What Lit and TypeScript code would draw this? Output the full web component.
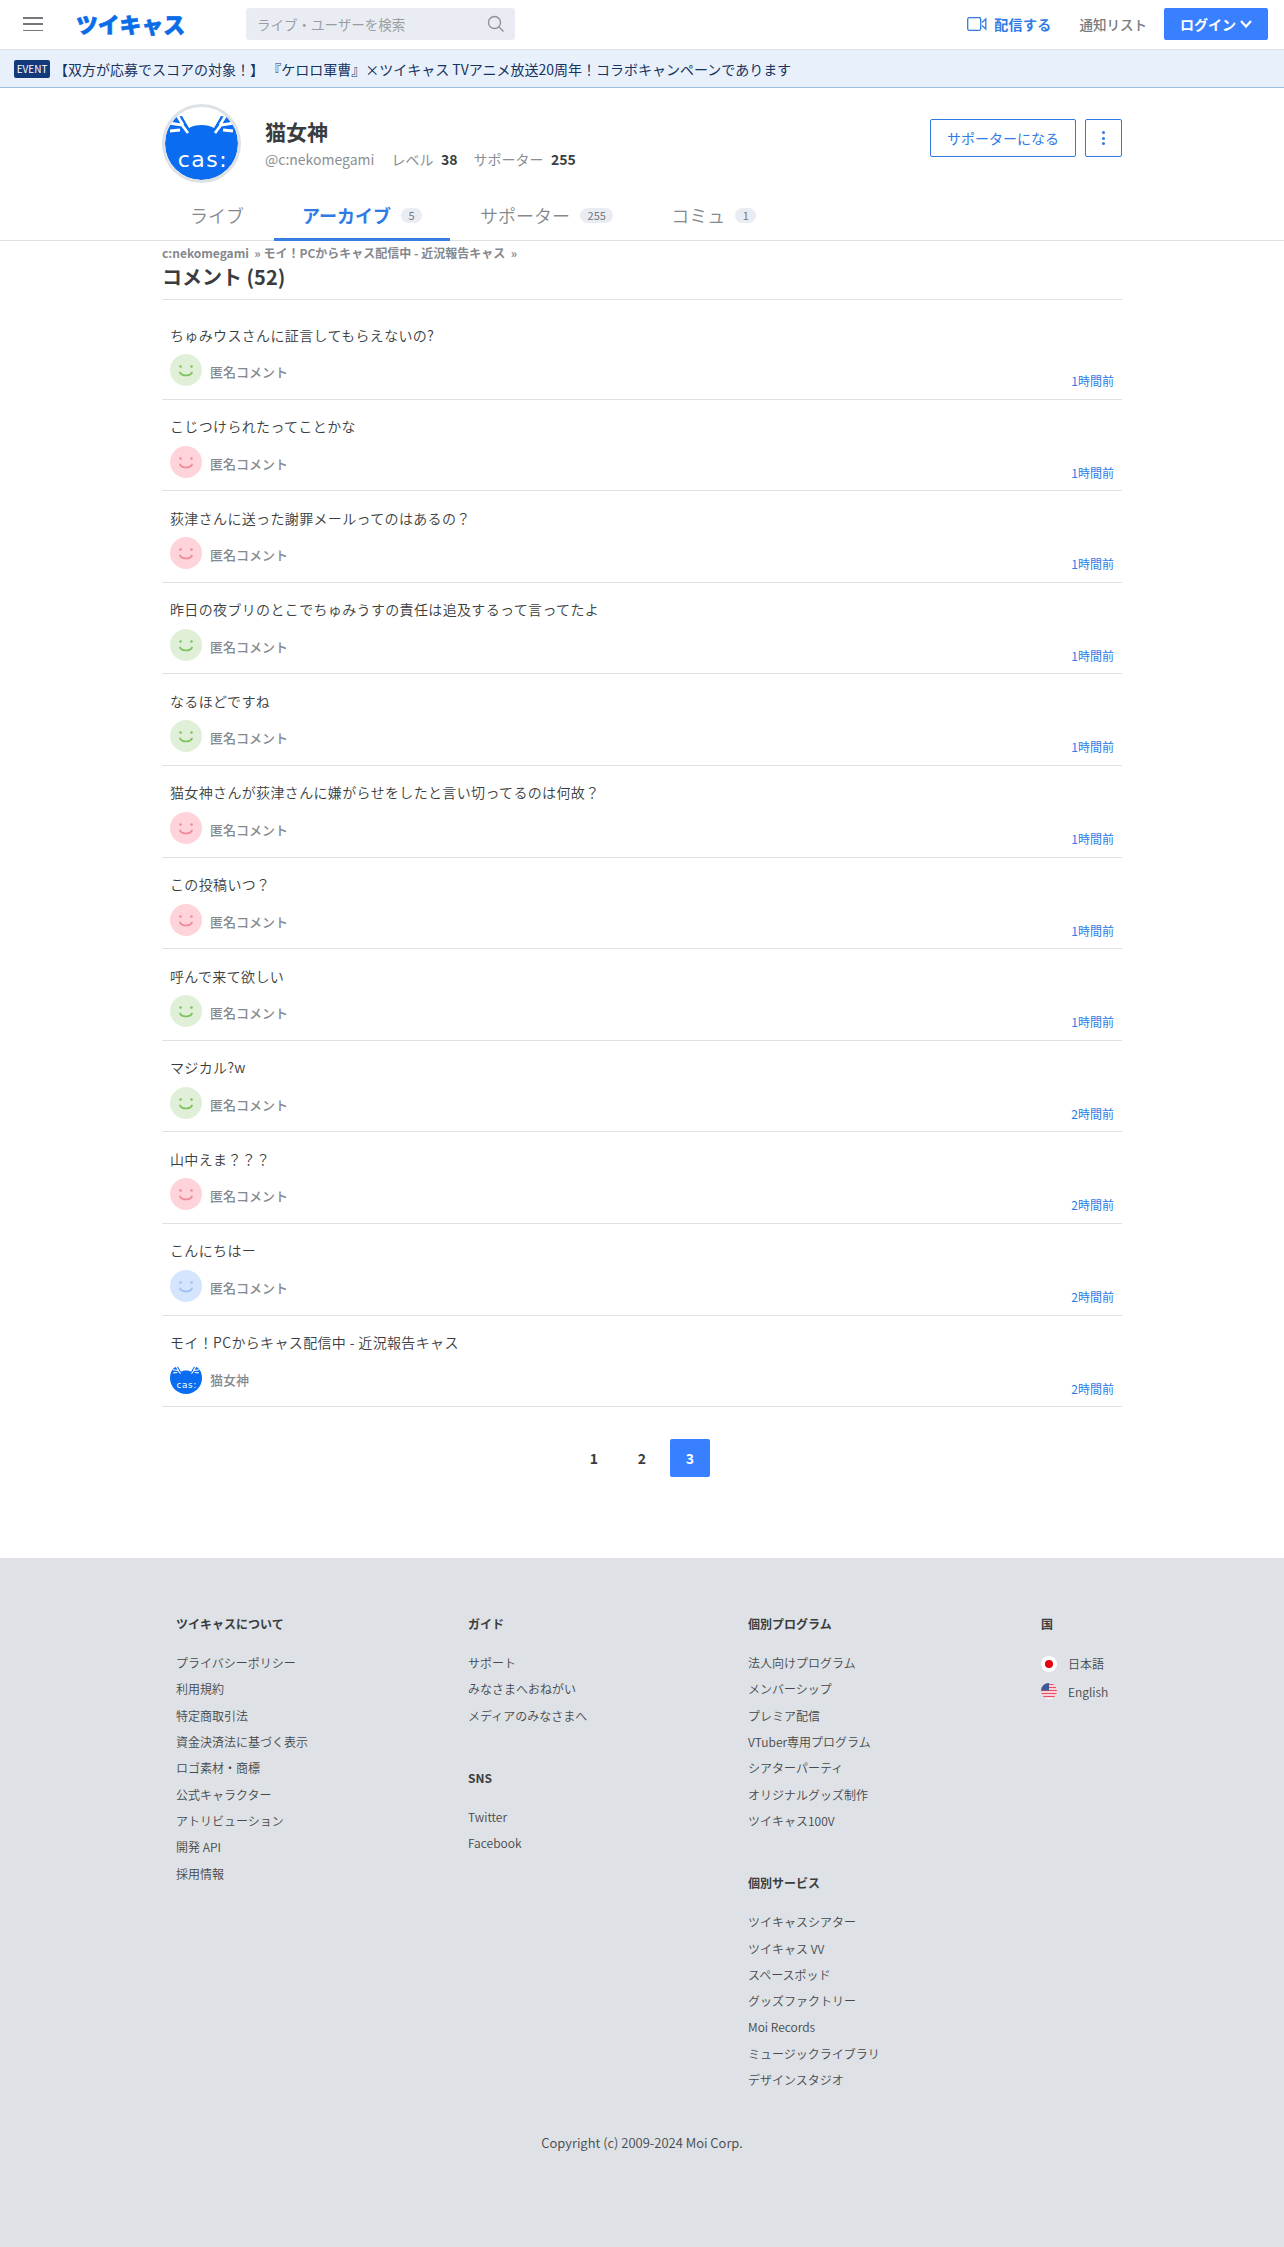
import { LitElement, html, css, svg } from "lit";
import { customElement } from "lit/decorators.js";

const catAvatar = (size: number, ring: boolean) => html`<svg class="cat" width=${size} height=${size} viewBox="0 0 79 79">
  <circle cx="39.5" cy="39.5" r="38" fill="#fff"></circle>
  <clipPath id="c${size}"><circle cx="39.5" cy="39.5" r=${ring ? 36.5 : 39.5}></circle></clipPath>
  <g clip-path="url(#c${size})">
    <path d="M0 22 L12 13 L20 12 L27 24 C33 20 46 20 52 24 L59 12 L67 13 L79 22 L79 79 L0 79 Z" fill="#0a6cf0"></path>
    <path d="M7 19 L20 21 L26 29 M15 11 L21 21 M8 27 L18 26" stroke="#fff" stroke-width="2.8" fill="none"></path>
    <path d="M72 19 L59 21 L53 29 M64 11 L58 21 M71 27 L61 26" stroke="#fff" stroke-width="2.8" fill="none"></path>
    <text x="41" y="63" text-anchor="middle" font-size="22" letter-spacing="1.5" fill="#fff" font-family="'DejaVu Sans', sans-serif">cas:</text>
  </g>
  ${ring ? svg`<circle cx="39.5" cy="39.5" r="38" fill="none" stroke="#dfe2e5" stroke-width="3"></circle>` : ""}
</svg>`;

const smile = (bg: string, fg: string) => html`<svg class="face" width="32" height="32" viewBox="0 0 32 32">
  <circle cx="16" cy="16" r="16" fill=${bg}></circle>
  <circle cx="10.5" cy="12.5" r="1.3" fill=${fg}></circle>
  <circle cx="21.5" cy="12.5" r="1.3" fill=${fg}></circle>
  <path d="M10 18.5 C12 22.5 20 22.5 22 18.5" stroke=${fg} stroke-width="1.7" fill="none" stroke-linecap="round"></path>
</svg>`;

const G = ["#e0f0d8", "#7cc35e"];
const R = ["#ffd3da", "#f08a9a"];
const B = ["#d5e5fd", "#9dbff2"];

const comments: [string, string[] | null, string][] = [
  ["ちゅみウスさんに証言してもらえないの?", G, "1時間前"],
  ["こじつけられたってことかな", R, "1時間前"],
  ["荻津さんに送った謝罪メールってのはあるの？", R, "1時間前"],
  ["昨日の夜ブリのとこでちゅみうすの責任は追及するって言ってたよ", G, "1時間前"],
  ["なるほどですね", G, "1時間前"],
  ["猫女神さんが荻津さんに嫌がらせをしたと言い切ってるのは何故？", R, "1時間前"],
  ["この投稿いつ？", R, "1時間前"],
  ["呼んで来て欲しい", G, "1時間前"],
  ["マジカル?w", G, "2時間前"],
  ["山中えま？？？", R, "2時間前"],
  ["こんにちはー", B, "2時間前"],
  ["モイ！PCからキャス配信中 - 近況報告キャス", null, "2時間前"],
];

const footerCols: { h: string; items: string[] }[][] = [
  [{ h: "ツイキャスについて", items: ["プライバシーポリシー", "利用規約", "特定商取引法", "資金決済法に基づく表示", "ロゴ素材・商標", "公式キャラクター", "アトリビューション", "開発 API", "採用情報"] }],
  [
    { h: "ガイド", items: ["サポート", "みなさまへおねがい", "メディアのみなさまへ"] },
    { h: "SNS", items: ["Twitter", "Facebook"] },
  ],
  [
    { h: "個別プログラム", items: ["法人向けプログラム", "メンバーシップ", "プレミア配信", "VTuber専用プログラム", "シアターパーティ", "オリジナルグッズ制作", "ツイキャス100V"] },
    { h: "個別サービス", items: ["ツイキャスシアター", "ツイキャス VV", "スペースポッド", "グッズファクトリー", "Moi Records", "ミュージックライブラリ", "デザインスタジオ"] },
  ],
];

@customElement("app-root")
export class AppRoot extends LitElement {
  static styles = css`
    :host { display: block; font-family: "Noto Sans CJK JP", "Noto Sans", sans-serif; color: #3a3d40; background: #fff; height: 2247px; overflow: hidden; }
    * { box-sizing: border-box; }
    .hdr { height: 50px; border-bottom: 1px solid #dfe2e5; display: flex; align-items: center; padding: 0 16px 1px 23px; }
    .burger { width: 20px; height: 14px; display: flex; flex-direction: column; justify-content: space-between; margin-right: 33px; }
    .burger i { display: block; height: 1.5px; background: #74787c; }
    .logo { font-size: 21.8px; font-weight: 900; color: #0a6de8; width: 108px; line-height: 28px; white-space: nowrap; -webkit-text-stroke: 0.6px #0a6de8; }
    .search { margin-left: 62px; width: 269px; height: 32px; background: #e9edf3; border-radius: 3px; display: flex; align-items: center; justify-content: space-between; padding: 0 10px 0 11px; font-size: 13.5px; color: #9a9ea3; }
    .right { margin-left: auto; display: flex; align-items: center; }
    .cast { display: flex; align-items: center; gap: 7px; color: #2f7be6; font-size: 14px; font-weight: 700; margin-right: 28px; letter-spacing: 0.3px; }
    .notice { font-size: 13.5px; font-weight: 500; color: #777b80; margin-right: 17px; }
    .login { width: 104px; height: 32px; background: #3880ff; border-radius: 2px; color: #fff; font-size: 14px; font-weight: 700; display: flex; align-items: center; justify-content: center; gap: 4px; }
    .event { height: 38px; background: #e8f1fb; border-bottom: 1px solid #9cc0e0; display: flex; align-items: center; padding-left: 14px; font-size: 14px; color: #17345f; white-space: pre; }
    .badge { width: 36px; height: 18px; background: #14397a; border-radius: 2px; color: #fff; font-size: 10px; line-height: 18px; text-align: center; margin-right: 4px; flex: none; }
    .wrap { width: 960px; margin-left: 162px; }
    .prof { display: flex; padding-top: 16px; height: 101px; }
    .cat { display: block; flex: none; }
    .info { margin-left: 24px; padding-top: 13px; }
    .name { font-size: 21px; font-weight: 700; line-height: 28px; color: #3a3d40; }
    .sub { font-size: 14px; line-height: 20px; margin-top: 4px; color: #8b8f94; display: flex; }
    .sub b { color: #3a3d40; font-weight: 700; margin: 0 16px 0 7.5px; }
    .sub .id { margin-right: 17px; }
    .acts { margin-left: auto; display: flex; gap: 9px; padding-top: 15px; }
    .btn { height: 38px; border: 1px solid #2f7be6; border-radius: 2px; color: #2f7be6; font-size: 14px; display: flex; align-items: center; justify-content: center; background: #fff; }
    .btn.w { width: 146px; }
    .btn.m { width: 37px; flex-direction: column; gap: 2.5px; }
    .btn.m i { width: 3px; height: 3px; border-radius: 50%; background: #2f7be6; }
    .tabbar { border-bottom: 1px solid #dfe2e5; height: 52px; }
    .tabs { display: flex; gap: 2px; height: 52px; }
    .tab { padding: 3px 28px 0; display: flex; align-items: center; height: 52px; font-size: 18px; font-weight: 350; color: #85898e; gap: 10px; border-bottom: 3px solid transparent; }
    .tab.on { color: #2f7be6; font-weight: 700; border-bottom-color: #3a7de0; }
    .cnt { font-size: 11px; font-weight: 400; line-height: 15px; height: 15px; padding: 0 7.5px; background: #e9edf3; border-radius: 8px; color: #74787c; }
    .crumb { margin-top: 3px; font-size: 12px; line-height: 18px; font-weight: 700; color: #85898e; display: flex; white-space: pre; }
    .title { font-size: 20px; font-weight: 700; line-height: 24px; margin-top: 3px; padding-bottom: 10px; border-bottom: 1px solid #dfe2e5; color: #3a3d40; height: 35px; }
    .list { margin-top: 8px; }
    .row { height: 91.6px; padding: 15.5px 8px 0; border-bottom: 1px solid #dfe2e5; }
    .txt { font-size: 14px; line-height: 22px; color: #3a3d40; font-weight: 350; letter-spacing: 0.35px; white-space: nowrap; }
    .meta { display: flex; align-items: flex-start; margin-top: 8.5px; height: 35px; }
    .meta .face, .meta .cat { flex: none; }
    .who { margin-left: 8px; margin-top: 9px; font-size: 13px; line-height: 18px; color: #85898e; font-weight: 500; }
    .time { margin-left: auto; align-self: flex-end; font-size: 12px; line-height: 16px; color: #2f7be6; }
    .pager { display: flex; justify-content: center; gap: 8px; margin-top: 32px; height: 119px; }
    .pg { width: 40px; height: 38px; display: flex; align-items: center; justify-content: center; font-size: 14px; font-weight: 700; color: #3a3d40; border-radius: 2px; }
    .pg.on { background: #3880ff; color: #fff; }
    .foot { background: #dee1e5; height: 689px; padding: 57px 0 0 176px; font-size: 12px; font-weight: 350; color: #45484c; }
    .grid { display: grid; grid-template-columns: 292px 280px 293px 1fr; height: 471px; }
    .sec + .sec { margin-top: 40px; }
    .fh { font-size: 12px; font-weight: 700; line-height: 18px; margin-bottom: 17px; color: #3a3d40; }
    .fi { height: 26.3px; line-height: 26px; white-space: nowrap; }
    .lang { display: flex; align-items: center; gap: 11px; height: 27.5px; }
    .lang svg { flex: none; }
    .copy { margin-left: -176px; text-align: center; font-size: 13px; line-height: 18px; color: #45484c; margin-top: 48px; }
  `;

  render() {
    return html`
      <div class="hdr">
        <div class="burger"><i></i><i></i><i></i></div>
        <div class="logo">ツイキャス</div>
        <div class="search">
          <span>ライブ・ユーザーを検索</span>
          <svg width="18" height="18" viewBox="0 0 18 18" fill="none" stroke="#8f9398" stroke-width="1.4"><circle cx="7.5" cy="7.5" r="6"></circle><path d="M12 12 L16.5 16.5"></path></svg>
        </div>
        <div class="right">
          <div class="cast">
            <svg width="20" height="14" viewBox="0 0 20 14" fill="none" stroke="#2f7be6" stroke-width="1.3"><rect x="0.7" y="0.7" width="13" height="12.6" rx="1.5"></rect><path d="M15 5.5 L18.8 2 V12 L15 8.5"></path></svg>
            <span>配信する</span>
          </div>
          <div class="notice">通知リスト</div>
          <div class="login">ログイン<svg width="12" height="8" viewBox="0 0 12 8" fill="none" stroke="#fff" stroke-width="2.2"><path d="M1 1 L6 6.5 L11 1"></path></svg></div>
        </div>
      </div>
      <div class="event"><span class="badge">EVENT</span>【双方が応募でスコアの対象！】 『ケロロ軍曹』×ツイキャス TVアニメ放送20周年！コラボキャンペーンであります</div>
      <div class="wrap prof">
        ${catAvatar(79, true)}
        <div class="info">
          <div class="name">猫女神</div>
          <div class="sub"><span class="id">@c:nekomegami</span><span>レベル</span><b>38</b><span>サポーター</span><b>255</b></div>
        </div>
        <div class="acts">
          <div class="btn w">サポーターになる</div>
          <div class="btn m"><i></i><i></i><i></i></div>
        </div>
      </div>
      <div class="tabbar"><div class="wrap tabs">
        <div class="tab">ライブ</div>
        <div class="tab on">アーカイブ<span class="cnt">5</span></div>
        <div class="tab">サポーター<span class="cnt">255</span></div>
        <div class="tab">コミュ<span class="cnt">1</span></div>
      </div></div>
      <div class="wrap">
        <div class="crumb">c:nekomegami  » モイ！PCからキャス配信中 - 近況報告キャス  »</div>
        <div class="title">コメント (52)</div>
        <div class="list">
          ${comments.map(([t, c, time]) => html`<div class="row">
            <div class="txt">${t}</div>
            <div class="meta">
              ${c ? smile(c[0], c[1]) : catAvatar(32, false)}
              <span class="who">${c ? "匿名コメント" : "猫女神"}</span>
              <span class="time">${time}</span>
            </div>
          </div>`)}
        </div>
        <div class="pager">
          <div class="pg">1</div><div class="pg">2</div><div class="pg on">3</div>
        </div>
      </div>
      <div class="foot">
        <div class="grid">
          ${footerCols.map((col) => html`<div>${col.map((s) => html`<div class="sec">
            <div class="fh">${s.h}</div>
            ${s.items.map((i) => html`<div class="fi">${i}</div>`)}
          </div>`)}</div>`)}
          <div>
            <div class="fh">国</div>
            <div class="lang">
              <svg width="16" height="16" viewBox="0 0 16 16"><circle cx="8" cy="8" r="8" fill="#fff"></circle><circle cx="8" cy="8" r="4" fill="#e60012"></circle></svg>
              <span>日本語</span>
            </div>
            <div class="lang">
              <svg width="16" height="16" viewBox="0 0 16 16">
                <clipPath id="us"><circle cx="8" cy="8" r="8"></circle></clipPath>
                <g clip-path="url(#us)">
                  <rect width="16" height="16" fill="#fff"></rect>
                  <path d="M0 1.5H16M0 4.5H16M0 7.5H16M0 10.5H16M0 13.5H16" stroke="#e8506a" stroke-width="1.5"></path>
                  <rect width="8" height="7.5" fill="#3c5a94"></rect>
                </g>
              </svg>
              <span>English</span>
            </div>
          </div>
        </div>
        <div class="copy">Copyright (c) 2009-2024 Moi Corp.</div>
      </div>
    `;
  }
}
